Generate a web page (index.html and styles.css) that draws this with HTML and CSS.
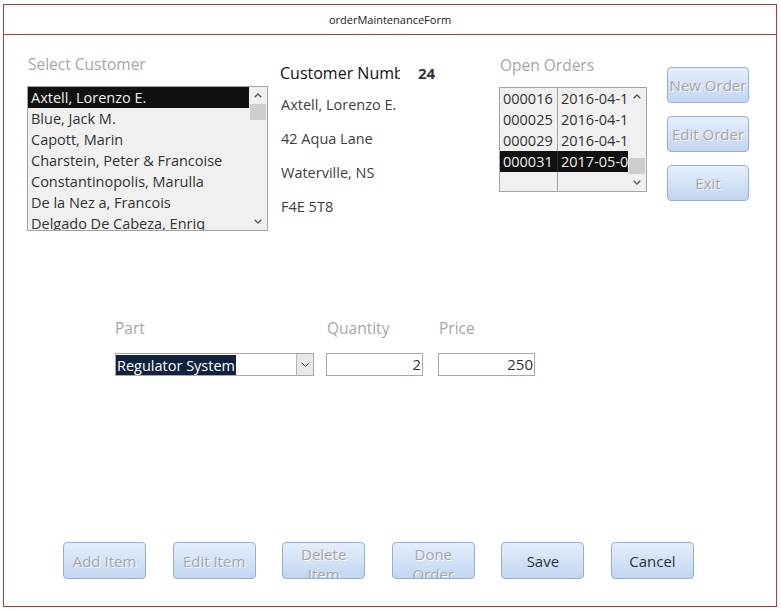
FILE: index.html
```html
<!DOCTYPE html>
<html>
<head>
<meta charset="utf-8">
<title>orderMaintenanceForm</title>
<link rel="stylesheet" href="styles.css">
</head>
<body>
<div class="window">
  <div class="titlebar">orderMaintenanceForm</div>
  <div class="content">
    <div class="top">
      <div class="col-cust">
        <div class="label">Select Customer</div>
        <div class="listbox cust-list">
          <div class="rows">
            <div class="row sel">Axtell, Lorenzo E.</div>
            <div class="row">Blue, Jack M.</div>
            <div class="row">Capott, Marin</div>
            <div class="row">Charstein, Peter &amp; Francoise</div>
            <div class="row">Constantinopolis, Marulla</div>
            <div class="row">De la Nez a, Francois</div>
            <div class="row">Delgado De Cabeza, Enriq</div>
          </div>
          <div class="vscroll">
            <div class="arrow"><svg width="8" height="5" viewBox="0 0 8 5"><polyline points="0.7,4.3 4,1 7.3,4.3" fill="none" stroke="#5a5a5a" stroke-width="1.4"/></svg></div>
            <div class="thumb"></div>
            <div class="spacer"></div>
            <div class="arrow"><svg width="8" height="5" viewBox="0 0 8 5"><polyline points="0.7,0.7 4,4 7.3,0.7" fill="none" stroke="#5a5a5a" stroke-width="1.4"/></svg></div>
          </div>
        </div>
      </div>

      <div class="col-info">
        <div class="cnum-row">
          <span class="cnum-label">Customer Number</span>
          <span class="cnum-value">24</span>
        </div>
        <div class="addr">Axtell, Lorenzo E.</div>
        <div class="addr">42 Aqua Lane</div>
        <div class="addr">Waterville, NS</div>
        <div class="addr">F4E 5T8</div>
      </div>

      <div class="col-orders">
        <div class="label">Open Orders</div>
        <div class="listbox order-list">
          <div class="rows orows">
            <div class="orow"><span class="c1">000016</span><span class="c2">2016-04-18</span></div>
            <div class="orow"><span class="c1">000025</span><span class="c2">2016-04-19</span></div>
            <div class="orow"><span class="c1">000029</span><span class="c2">2016-04-19</span></div>
            <div class="orow sel"><span class="c1">000031</span><span class="c2">2017-05-01</span></div>
          </div>
          <div class="vscroll">
            <div class="arrow"><svg width="8" height="5" viewBox="0 0 8 5"><polyline points="0.7,4.3 4,1 7.3,4.3" fill="none" stroke="#5a5a5a" stroke-width="1.4"/></svg></div>
            <div class="spacer"></div>
            <div class="thumb"></div>
            <div class="arrow"><svg width="8" height="5" viewBox="0 0 8 5"><polyline points="0.7,0.7 4,4 7.3,0.7" fill="none" stroke="#5a5a5a" stroke-width="1.4"/></svg></div>
          </div>
        </div>
      </div>

      <div class="col-buttons">
        <div class="btn disabled">New Order</div>
        <div class="btn disabled">Edit Order</div>
        <div class="btn disabled">Exit</div>
      </div>
    </div>

    <div class="part-section">
      <div class="field f-part">
        <div class="label">Part</div>
        <div class="combo">
          <div class="combo-text"><span class="hl">Regulator System</span></div>
          <div class="combo-btn"><svg width="9" height="5" viewBox="0 0 9 5"><polyline points="0.5,0.5 4.5,4.5 8.5,0.5" fill="none" stroke="#555" stroke-width="1"/></svg></div>
        </div>
      </div>
      <div class="field f-qty">
        <div class="label">Quantity</div>
        <div class="textbox">2</div>
      </div>
      <div class="field f-price">
        <div class="label">Price</div>
        <div class="textbox">250</div>
      </div>
    </div>

    <div class="bottom">
      <div class="btn disabled">Add Item</div>
      <div class="btn disabled">Edit Item</div>
      <div class="btn disabled wrap">Delete<br>Item</div>
      <div class="btn disabled wrap">Done<br>Order</div>
      <div class="btn">Save</div>
      <div class="btn">Cancel</div>
    </div>
  </div>
</div>
</body>
</html>
```

FILE: styles.css
```css
* { box-sizing: border-box; }

body {
  margin: 0;
  background: #ffffff;
  font-family: "Open Sans", "Noto Sans", sans-serif;
  color: #333;
}

.window {
  margin: 4px 0 0 3px;
  width: 774px;
  height: 603px;
  border: 1px solid #b3363b;
  display: flex;
  flex-direction: column;
}

.titlebar {
  height: 30px;
  flex: none;
  border-bottom: 1px solid #b3363b;
  text-align: center;
  font-size: 11px;
  line-height: 29px;
  color: #1a1a1a;
}

.content {
  flex: 1;
  display: flex;
  flex-direction: column;
}

.label {
  font-size: 15.5px;
  line-height: 18px;
  color: #a6a6a6;
  white-space: nowrap;
}

/* top area */
.top {
  display: flex;
  align-items: flex-start;
  padding-left: 23px;
}

.col-cust {
  width: 241px;
  padding-top: 20px;
}

.col-cust .label { margin-bottom: 13px; padding-left: 1px; }

.listbox {
  display: flex;
  border: 1px solid #a3a3a3;
  background: #f0f0f0;
  overflow: hidden;
}

.cust-list { height: 145px; }

.rows {
  flex: 1;
  overflow: hidden;
}

.row {
  height: 21px;
  line-height: 21px;
  padding-left: 3px;
  font-size: 14.5px;
  color: #333;
  white-space: nowrap;
}

.row.sel, .orow.sel {
  background: #111111;
  color: #eeeeee;
}

.vscroll {
  width: 18px;
  flex: none;
  display: flex;
  flex-direction: column;
  background: #f0f0f0;
}

.vscroll .arrow {
  height: 17px;
  display: flex;
  align-items: center;
  justify-content: center;
}

.vscroll .thumb {
  height: 16px;
  margin: 0 1px;
  background: #cdcdcd;
}

.vscroll .spacer { flex: 1; }

.col-info {
  width: 219px;
  margin-left: 12px;
  padding-top: 28px;
}

.cnum-row {
  display: flex;
  height: 20px;
  line-height: 20px;
  font-size: 15px;
}

.cnum-label {
  width: 120px;
  overflow: hidden;
  white-space: nowrap;
  font-size: 16px;
  color: #111;
}

.cnum-value {
  margin-left: 18px;
  font-weight: bold;
  color: #333;
}

.addr {
  height: 34px;
  line-height: 34px;
  font-size: 14.5px;
  color: #404040;
  padding-left: 1px;
}

.cnum-row + .addr { margin-top: 5px; }

.col-orders {
  width: 148px;
  padding-top: 21px;
}

.col-orders .label { margin-bottom: 13px; padding-left: 1px; }

.order-list { height: 105px; }

.orows {
  background: linear-gradient(to right, transparent 57px, #a3a3a3 57px, #a3a3a3 58px, transparent 58px);
}

.orow {
  display: flex;
  height: 21px;
  line-height: 21px;
  font-size: 14.5px;
  color: #333;
  white-space: nowrap;
}

.orow .c1 {
  width: 58px;
  flex: none;
  padding-left: 3px;
  border-right: 1px solid #a3a3a3;
}

.orow.sel .c1 { border-right-color: #2a2a2a; }

.orow .c2 {
  flex: 1;
  padding-left: 3px;
  overflow: hidden;
}

.col-buttons {
  margin-left: 20px;
  padding-top: 32px;
  display: flex;
  flex-direction: column;
  gap: 13px;
}

.col-buttons .btn {
  width: 82px;
  height: 36px;
}

/* buttons */
.btn {
  display: flex;
  align-items: center;
  justify-content: center;
  text-align: center;
  border: 1px solid #8eb0dc;
  border-radius: 4px;
  background: linear-gradient(#e6eefa, #c2d6f1);
  font-size: 15px;
  color: #333;
  overflow: hidden;
  white-space: nowrap;
}

.btn.disabled {
  color: #a8a8a8;
  text-shadow: 1px 1px 0 #f7f9fc;
}

.btn.wrap {
  align-items: flex-start;
  line-height: 20px;
  padding-top: 1px;
}

/* part row */
.part-section {
  display: flex;
  margin-top: 88px;
  padding-left: 111px;
}

.field .label { margin-bottom: 16px; }

.f-part { width: 199px; }
.f-qty { width: 97px; margin-left: 12px; }
.f-price { width: 97px; margin-left: 15px; }

.f-qty .label, .f-price .label { padding-left: 1px; }

.combo {
  display: flex;
  height: 23px;
  border: 1px solid #a8a8a8;
  background: #fff;
}

.combo-text {
  flex: 1;
  overflow: hidden;
  white-space: nowrap;
}

.hl {
  display: inline-block;
  height: 21px;
  line-height: 21px;
  background: #0f2341;
  color: #ffffff;
  font-size: 14.5px;
  padding: 0 1px 0 1px;
}

.combo-btn {
  width: 17px;
  flex: none;
  border-left: 1px solid #b5b5b5;
  background: #e8e8e8;
  display: flex;
  align-items: center;
  justify-content: center;
}

.textbox {
  height: 23px;
  border: 1px solid #a8a8a8;
  background: #fff;
  text-align: right;
  padding-right: 1px;
  font-size: 15px;
  line-height: 21px;
  color: #333;
}

/* bottom buttons */
.bottom {
  margin-top: auto;
  display: flex;
  gap: 26.6px;
  padding: 0 0 27px 59px;
}

.bottom .btn {
  width: 83px;
  height: 37px;
}
```
